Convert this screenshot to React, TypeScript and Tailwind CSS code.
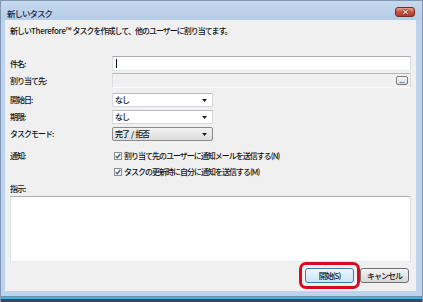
import React from 'react';

const font = "font-['Noto_Sans_CJK_JP','Noto_Sans',sans-serif]";

function Arrow() {
    return (
        <svg width="5" height="3" viewBox="0 0 5 3" className="shrink-0">
            <path d="M0 0h5L2.5 3z" fill="#1a1a1a" />
        </svg>
    );
}

function Combo({ value, button }: { value: React.ReactNode; button?: boolean }) {
    return (
        <div
            className={
                button
                    ? 'w-[101px] h-[14px] flex items-center justify-between pl-[2px] pr-[5px] rounded-[2px] border border-[#8a8a8a] bg-gradient-to-b from-[#f3f3f3] to-[#dcdcdc]'
                    : 'w-[101px] h-[14px] flex items-center justify-between pl-[2px] pr-[5px] border border-[#d5d8dd] border-t-[#b9bcc2] bg-white'
            }
        >
            <span>{value}</span>
            <Arrow />
        </div>
    );
}

function Check({ label }: { label: string }) {
    return (
        <div className="h-[15px] flex items-center pl-[2px] gap-[2px]">
            <svg width="8" height="8" viewBox="0 0 8 8" className="shrink-0">
                <rect x="0.5" y="0.5" width="7" height="7" fill="#f4f4f4" stroke="#8e8f8f" />
                <path d="M1.8 4.2 3.3 5.8 6.3 2" fill="none" stroke="#3a5597" strokeWidth="1.3" />
            </svg>
            <span>{label}</span>
        </div>
    );
}

function Row({ label, children, className }: { label: string; children: React.ReactNode; className: string }) {
    return (
        <div className={`flex items-center ${className}`}>
            <span className="w-[102px] shrink-0">{label}</span>
            {children}
        </div>
    );
}

export default function App() {
    return (
        <div
            className={`w-[423px] h-[302px] flex flex-col bg-[#bcd2ee] border-x border-t border-[#8196b0] text-[#141414] ${font} font-medium text-[8px] leading-[12px] tracking-[-1px]`}
        >
            <div className="h-[19px] shrink-0 flex items-center justify-between pl-[6px] pr-[7px] pt-[4px] bg-gradient-to-b from-[#c6d9ef] to-[#b5cce8]">
                <span className="text-[#1b2b3e] text-[8.5px]">新しいタスク</span>
                <div className="w-[20px] h-[10px] -mt-[1px] flex items-center justify-center rounded-[3px] border border-[#7a2a20] bg-gradient-to-b from-[#e5a08f] via-[#c9503f] to-[#b63a2b]">
                    <svg width="7" height="6" viewBox="0 0 7 6">
                        <path d="M1 0.8 6 5.2M6 0.8 1 5.2" stroke="#5a1d14" strokeWidth="2.2" />
                        <path d="M1 0.8 6 5.2M6 0.8 1 5.2" stroke="#ffffff" strokeWidth="1.1" />
                    </svg>
                </div>
            </div>

            <div className="ml-[4px] mr-[6px] flex-1 flex flex-col bg-[#f0f0f0] px-[5px] pt-[5px]">
                <p className="h-[12px]">
                    新しい<span className="tracking-[-0.3px]">Therefore™ </span>タスクを作成して、他のユーザーに割り当てます。
                </p>

                <Row label="件名:" className="mt-[19px] h-[15px]">
                    <div className="flex-1 h-[15px] flex items-center pl-[3px] border border-[#abadb3] border-x-[#dbdfe6] border-b-[#e3e9ef] bg-white">
                        <div className="w-[1px] h-[9px] bg-black" />
                    </div>
                </Row>

                <Row label="割り当て先:" className="mt-[2px] h-[15px]">
                    <div className="flex-1 h-[15px] flex items-center justify-end pr-[2px] border border-[#b4b7bb] border-x-[#dadcdf] border-b-white bg-[#f0f0f0]">
                        <div className="w-[12px] h-[9px] flex items-end justify-center rounded-[2px] border border-[#7c7c7c] bg-gradient-to-b from-[#f6f6f6] to-[#dadada] text-[6px] leading-[6px] tracking-normal">
                            ...
                        </div>
                    </div>
                </Row>

                <Row label="開始日:" className="mt-[5px] h-[14px]">
                    <Combo value="なし" />
                </Row>
                <Row label="期限:" className="mt-[3px] h-[14px]">
                    <Combo value="なし" />
                </Row>
                <Row label="タスクモード:" className="mt-[3px] h-[14px]">
                    <Combo value={<>完了<span className="px-[2px]">/</span>拒否</>} button />
                </Row>

                <Row label="通知:" className="mt-[7px] h-[15px]">
                    <Check label="割り当て先のユーザーに通知メールを送信する(N)" />
                </Row>
                <div className="mt-[1px] pl-[102px]">
                    <Check label="タスクの更新時に自分に通知を送信する(M)" />
                </div>

                <p className="mt-[4px] h-[12px]">指示:</p>
                <div className="mt-[1px] h-[66px] border border-[#abadb3] border-x-[#dbdfe6] border-b-[#e3e9ef] bg-white" />

                <div className="mt-[6px] h-[15px] flex justify-end gap-[6px] pr-[2px]">
                    <div className="relative">
                        <div className="w-[49px] h-[15px] flex items-center justify-center rounded-[3px] border border-[#3c7fb1] bg-gradient-to-b from-[#eef7fd] to-[#c9e6f9]">
                            開始(S)
                        </div>
                        <div className="absolute -inset-[6px] rounded-[7px] border-[3px] border-[#da0a1e]" />
                    </div>
                    <div className="w-[49px] h-[15px] flex items-center justify-center rounded-[3px] border border-[#707070] bg-gradient-to-b from-[#f4f4f4] to-[#d6d6d6]">
                        キャンセル
                    </div>
                </div>
            </div>

            <div className="h-[11px] shrink-0 flex flex-col">
                <div className="h-[5px] bg-[#bcd2ee]" />
                <div className="h-[1px] bg-[#7090ad]" />
                <div className="h-[2px] bg-[#33b8e8]" />
                <div className="flex-1 bg-[#34495b]" />
            </div>
        </div>
    );
}
